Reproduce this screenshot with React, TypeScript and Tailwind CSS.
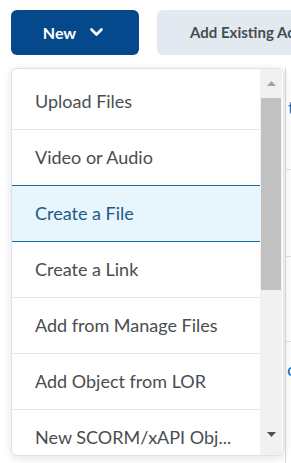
import React from "react";

const items = [
  "Upload Files",
  "Video or Audio",
  "Create a File",
  "Create a Link",
  "Add from Manage Files",
  "Add Object from LOR",
  "New SCORM/xAPI Obj...",
];

export default function App() {
  return (
    <div
      className="relative w-[291px] h-[463px] bg-white overflow-hidden"
      style={{ fontFamily: "Lato, 'Open Sans', sans-serif" }}
    >
      {/* top buttons */}
      <div className="flex items-start pt-[10px] pl-[11px] gap-[18px]">
        <button className="w-[128px] h-[45px] shrink-0 rounded-[6px] bg-[#05488c] text-white font-bold text-[16px] flex items-center justify-center gap-[14px] pr-[4px]">
          <span>New</span>
          <svg width="13" height="9" viewBox="0 0 13 9">
            <path d="M1.5 1.5 L6.5 6.5 L11.5 1.5" fill="none" stroke="white" strokeWidth="2.6" strokeLinecap="round" strokeLinejoin="round" />
          </svg>
        </button>
        <button className="w-[180px] h-[45px] shrink-0 rounded-[6px] bg-[#e3e9f1] text-[#494c4e] font-bold text-[15px] flex items-center pl-[33px] whitespace-nowrap">
          Add Existing Activities
        </button>
      </div>

      {/* background page content */}
      <div className="mt-[13px] ml-[285px] h-[400px] border-l border-[#dcdcdc] flex flex-col">
        <div className="h-[102px] border-b border-[#e0e0e0] pl-[2px] pt-[30px] text-[#006fbf] text-[18px] leading-none">t</div>
        <div className="h-[87px] border-b border-[#e0e0e0]"></div>
        <div className="h-[85px] border-b border-[#e0e0e0]"></div>
        <div className="pl-[1px] pt-[18px] text-[#006fbf] text-[18px] leading-none">o</div>
      </div>

      {/* dropdown menu */}
      <div className="absolute left-[11px] top-[68px] w-[273px] h-[388px] rounded-[6px] border border-[#dfe2e6] bg-white shadow-[0_2px_10px_rgba(0,0,0,0.12)] flex overflow-hidden">
        <div className="flex-1 pt-[5px] overflow-hidden">
          {items.map((label, i) => {
            const highlighted = i === 2;
            const blueBorder = i === 1 || i === 2;
            return (
              <div
                key={label}
                className={
                  "h-[56px] shrink-0 flex items-center pl-[23px] text-[18px] whitespace-nowrap border-b " +
                  (blueBorder ? "border-[#1d6aa5] " : "border-[#e6e6e6] ") +
                  (highlighted ? "bg-[#e7f6fd] text-[#1c5a86]" : "text-[#4a4d50]")
                }
              >
                {label}
              </div>
            );
          })}
        </div>
        {/* scrollbar */}
        <div className="w-[22px] mr-[1px] bg-[#f1f1f1] flex flex-col">
          <div className="h-[29px] flex items-center justify-center">
            <svg width="9" height="5" viewBox="0 0 9 5">
              <path d="M0 5 L4.5 0 L9 5 Z" fill="#a3a3a3" />
            </svg>
          </div>
          <div className="h-[192px] mx-[1px] bg-[#c1c1c1]"></div>
          <div className="flex-1"></div>
          <div className="h-[24px] flex items-start justify-center pt-[1px]">
            <svg width="9" height="5" viewBox="0 0 9 5">
              <path d="M0 0 L4.5 5 L9 0 Z" fill="#505050" />
            </svg>
          </div>
        </div>
      </div>
    </div>
  );
}
